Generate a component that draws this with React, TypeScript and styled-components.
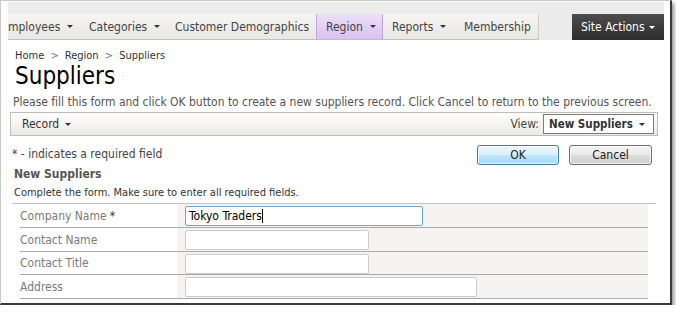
import styled, { createGlobalStyle } from "styled-components";

const GlobalStyle = createGlobalStyle`
  html, body {
    margin: 0;
    padding: 0;
    background: #fff;
  }
  body {
    font-family: "DejaVu Sans Condensed", "DejaVu Sans", "Liberation Sans", sans-serif;
  }
`;

interface NavItem {
  label: string;
  width: number;
  caret?: boolean;
  active?: boolean;
}

// the first item is cut by the screenshot edge, as in the original capture
const navItems: NavItem[] = [
  { label: "mployees", width: 72, caret: true },
  { label: "Categories", width: 86, caret: true },
  { label: "Customer Demographics", width: 150 },
  { label: "Region", width: 67, caret: true, active: true },
  { label: "Reports", width: 72, caret: true },
  { label: "Membership", width: 83 },
];

const fields = [
  { label: "Company Name", required: true, value: "Tokyo Traders", width: 238, height: 24, focused: true },
  { label: "Contact Name", width: 184, height: 24 },
  { label: "Contact Title", width: 184, height: 23 },
  { label: "Address", width: 292, height: 24 },
];

export default function App() {
  return (
    <>
      <GlobalStyle />
      <Frame>
        <TopBar>
          <Menu>
            {navItems.map((item, i) => (
              <MenuItem key={item.label} $width={item.width} $active={item.active} $first={i === 0}>
                {item.label}
                {item.caret && <Caret />}
              </MenuItem>
            ))}
          </Menu>
          <SiteActions>
            Site Actions <Caret $light />
          </SiteActions>
        </TopBar>

        <Content>
          <Breadcrumb>
            Home <Sep>&gt;</Sep> Region <Sep>&gt;</Sep> Suppliers
          </Breadcrumb>
          <Title>Suppliers</Title>
          <Description>
            Please fill this form and click OK button to create a new suppliers record. Click Cancel to
            return to the previous screen.
          </Description>

          <Toolbar>
            <ToolbarButton>
              Record <Caret />
            </ToolbarButton>
            <ViewGroup>
              <ViewLabel>View:</ViewLabel>
              <ViewSelect>
                New Suppliers <Caret />
              </ViewSelect>
            </ViewGroup>
          </Toolbar>

          <ActionRow>
            <RequiredNote>* - indicates a required field</RequiredNote>
            <Buttons>
              <Button $primary>OK</Button>
              <Button>Cancel</Button>
            </Buttons>
          </ActionRow>

          <CategoryTitle>New Suppliers</CategoryTitle>
          <CategoryHint>Complete the form. Make sure to enter all required fields.</CategoryHint>

          <FormTable>
            {fields.map((f) => (
              <FormRow key={f.label} $height={f.height}>
                <FieldLabel>
                  {f.label}
                  {f.required && <Asterisk>*</Asterisk>}
                </FieldLabel>
                <FieldCell>
                  <TextBox $width={f.width} $focused={f.focused}>
                    {f.value}
                    {f.focused && <Cursor />}
                  </TextBox>
                </FieldCell>
              </FormRow>
            ))}
          </FormTable>
        </Content>
      </Frame>
    </>
  );
}

const Frame = styled.div`
  width: 672px;
  height: 305px;
  box-sizing: border-box;
  border-top: 1px solid #c9c9c9;
  border-left: 1px solid #c9c9c9;
  border-right: 2px solid #3c3c3c;
  border-bottom: 2px solid #3c3c3c;
  box-shadow: 2px 3px 4px rgba(0, 0, 0, 0.45);
  padding: 1px 6px 0 7px;
  overflow: hidden;
  background: #fff;
`;

const TopBar = styled.div`
  display: flex;
  background: #ececec;
  padding-top: 12px;
  height: 38px;
  box-sizing: border-box;
`;

const Menu = styled.div`
  display: flex;
  height: 26px;
  box-sizing: border-box;
  background: linear-gradient(#f6f5f3, #e9e7e3);
  border-bottom: 1px solid #c4c0b8;
  border-right: 1px solid #cfccc6;
`;

const MenuItem = styled.div<{ $width: number; $active?: boolean; $first?: boolean }>`
  display: flex;
  align-items: center;
  gap: 7px;
  width: ${(p) => p.$width}px;
  box-sizing: border-box;
  padding-left: ${(p) => (p.$first ? 0 : 9)}px;
  font-size: 12px;
  color: #444;
  white-space: nowrap;
  ${(p) =>
    p.$active &&
    `
    background: linear-gradient(#ecdff7, #d9c2f0);
    border-left: 1px solid #c0a3dd;
    border-right: 1px solid #c0a3dd;
  `}
`;

const Caret = styled.span<{ $light?: boolean }>`
  display: inline-block;
  flex-shrink: 0;
  width: 0;
  height: 0;
  border-left: 3px solid transparent;
  border-right: 3px solid transparent;
  border-top: 3px solid ${(p) => (p.$light ? "#fff" : "#333")};
  vertical-align: middle;
`;

const SiteActions = styled.div`
  margin-left: auto;
  width: 92px;
  height: 26px;
  box-sizing: border-box;
  display: flex;
  align-items: center;
  gap: 4px;
  padding-left: 9px;
  background: linear-gradient(#4d4d4d, #2c2c2c);
  color: #fff;
  font-size: 12px;
  white-space: nowrap;
`;

const Content = styled.div`
  padding: 0 6px 0 2px;
`;

const Breadcrumb = styled.div`
  margin: 9px 0 0 5px;
  font-size: 11px;
  line-height: 13px;
  color: #333;
`;

const Sep = styled.span`
  color: #777;
  margin: 0 3px;
`;

const Title = styled.h1`
  margin: 0 0 0 5px;
  font-size: 24px;
  font-weight: normal;
  line-height: 28px;
  color: #000;
`;

const Description = styled.div`
  margin: 5px 0 0 3px;
  font-size: 12px;
  line-height: 14px;
  color: #555;
  white-space: nowrap;
  letter-spacing: -0.02px;
`;

const Toolbar = styled.div`
  display: flex;
  align-items: center;
  justify-content: space-between;
  margin-top: 3px;
  height: 24px;
  box-sizing: border-box;
  border: 1px solid #c2beb6;
  background: linear-gradient(#ffffff, #ebe9e5);
  padding: 0 3px 0 11px;
`;

const ToolbarButton = styled.div`
  display: flex;
  align-items: center;
  gap: 6px;
  font-size: 12px;
  color: #333;
`;

const ViewGroup = styled.div`
  display: flex;
  align-items: center;
  gap: 4px;
`;

const ViewLabel = styled.span`
  font-size: 12px;
  color: #444;
`;

const ViewSelect = styled.div`
  display: flex;
  align-items: center;
  justify-content: space-between;
  width: 111px;
  height: 20px;
  box-sizing: border-box;
  border: 1px solid #7b7b7b;
  background: #fff;
  padding: 0 8px 0 5px;
  font-size: 11.5px;
  font-weight: bold;
  color: #333;
  white-space: nowrap;
`;

const ActionRow = styled.div`
  display: flex;
  align-items: flex-start;
  justify-content: space-between;
  margin-top: 9px;
  padding-right: 6px;
`;

const RequiredNote = styled.div`
  margin: 2px 0 0 2px;
  font-size: 12px;
  color: #444;
`;

const Buttons = styled.div`
  display: flex;
  gap: 10px;
`;

const Button = styled.button<{ $primary?: boolean }>`
  width: ${(p) => (p.$primary ? 82 : 83)}px;
  height: 20px;
  padding: 0;
  font-family: inherit;
  font-size: 12px;
  color: #222;
  border-radius: 3px;
  border: 1px solid ${(p) => (p.$primary ? "#3c7fb1" : "#707070")};
  background: ${(p) =>
    p.$primary
      ? "linear-gradient(#eaf6fd 0%, #d9f0fc 50%, #bee6fd 51%, #a7d9f5 100%)"
      : "linear-gradient(#f2f2f2 0%, #ebebeb 50%, #dddddd 51%, #cfcfcf 100%)"};
  box-shadow: inset 0 0 0 1px rgba(255, 255, 255, 0.7);
`;

const CategoryTitle = styled.div`
  margin: 2px 0 0 4px;
  font-size: 12px;
  font-weight: bold;
  color: #555;
`;

const CategoryHint = styled.div`
  margin: 5px 0 0 4px;
  font-size: 11px;
  line-height: 14px;
  color: #333;
`;

const FormTable = styled.div`
  margin: 3px 0 0 2px;
  width: 644px;
  border-top: 1px solid #c4c4c4;
  padding: 0 8px;
  box-sizing: border-box;
`;

const FormRow = styled.div<{ $height: number }>`
  display: grid;
  grid-template-columns: 157px 1fr;
  border-bottom: 1px solid #a9a9a9;
  height: ${(p) => p.$height}px;
  box-sizing: border-box;
`;

const FieldLabel = styled.div`
  display: flex;
  align-items: center;
  font-size: 12px;
  color: #7b7b7b;
`;

const Asterisk = styled.span`
  color: #333;
  margin-left: 3px;
`;

const FieldCell = styled.div`
  background: #f5f4f2;
  padding: 2px 8px 0;
`;

const TextBox = styled.div<{ $width: number; $focused?: boolean }>`
  display: flex;
  align-items: center;
  width: ${(p) => p.$width}px;
  height: 20px;
  box-sizing: border-box;
  padding: 0 3px;
  background: #fff;
  border: 1px solid ${(p) => (p.$focused ? "#6fa7d8" : "#cbcbcb")};
  border-radius: 2px;
  font-size: 12px;
  color: #000;
`;

const Cursor = styled.span`
  display: inline-block;
  width: 1px;
  height: 14px;
  background: #000;
`;
